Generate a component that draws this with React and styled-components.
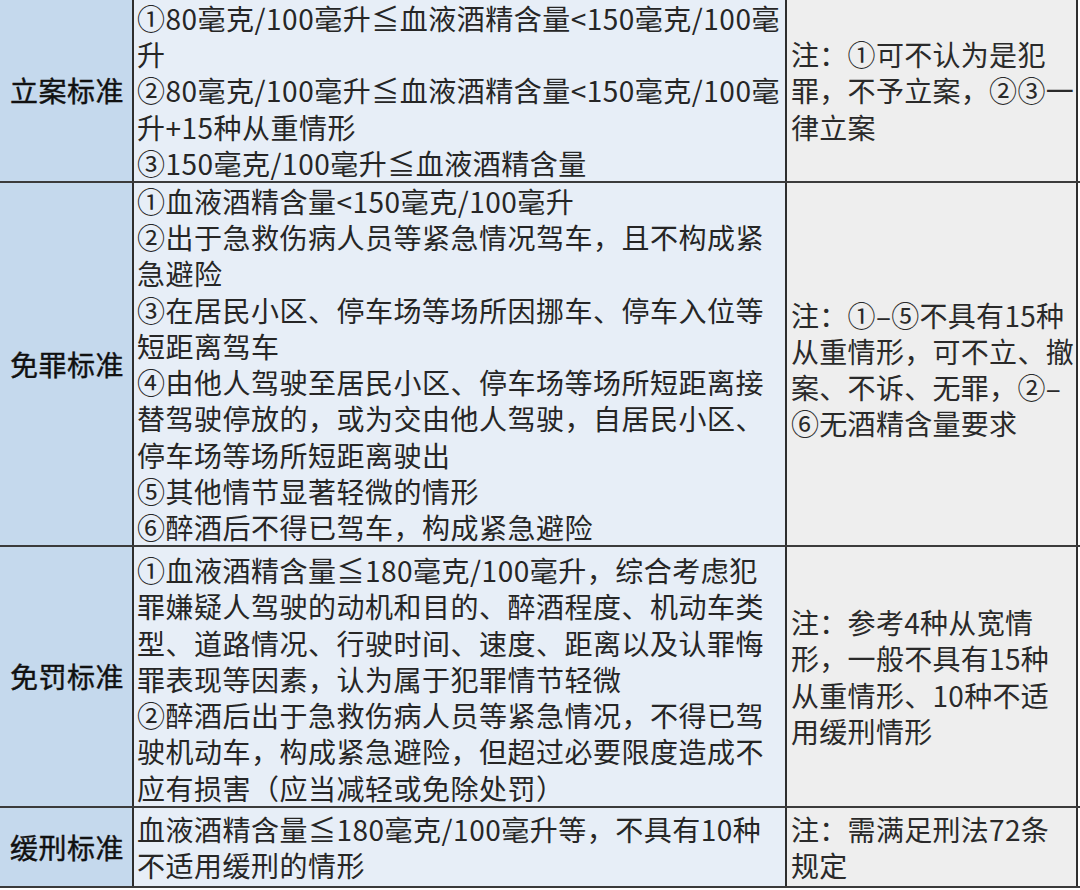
import React from "react";
import styled, { createGlobalStyle } from "styled-components";

const Global = createGlobalStyle`
  html, body { margin: 0; padding: 0; background: #ffffff; }
  body { font-family: "Noto Sans CJK SC", "Noto Sans", sans-serif; color: #222; }
`;

const Table = styled.div`
  width: 1080px;
  display: flex;
  flex-direction: column;
`;

const Row = styled.div`
  display: grid;
  grid-template-columns: 134px 653px 291px 2px;
  grid-template-rows: minmax(0, 1fr);
  height: ${(p) => p.$h}px;
  border-bottom: 2px solid #3b3b3b;
  box-sizing: border-box;
`;

const Cell = styled.div`
  display: flex;
  flex-direction: column;
  justify-content: center;
  box-sizing: border-box;
  min-height: 0;
  border-right: 2px solid #2e2e2e;
  font-size: 28px;
  line-height: 36.25px;
  letter-spacing: 0.5px;
  white-space: nowrap;
`;

const Label = styled(Cell)`
  background: #c5d9ed;
  align-items: center;
  font-weight: 400;
  color: #111;
  padding-left: 2px;
  -webkit-text-stroke: 0.4px #111;
`;

const Content = styled(Cell)`
  background: #e7eef7;
  padding-left: 3px;
  padding-top: ${(p) => p.$pt || 0}px;
  color: #262626;
`;

const Note = styled(Cell)`
  background: #eeeeee;
  padding-left: 4px;
  padding-top: ${(p) => p.$pt || 0}px;
  color: #2a2a2a;
  letter-spacing: 0.3px;
`;

const Edge = styled.div`
  background: #ffffff;
`;

const Line = styled.div`
  display: block;
`;

const rows = [
  {
    h: 183,
    label: "立案标准",
    content: [
      "①80毫克/100毫升≦血液酒精含量<150毫克/100毫",
      "升",
      "②80毫克/100毫升≦血液酒精含量<150毫克/100毫",
      "升+15种从重情形",
      "③150毫克/100毫升≦血液酒精含量",
    ],
    note: ["注：①可不认为是犯", "罪，不予立案，②③一", "律立案"],
  },
  {
    h: 364,
    label: "免罪标准",
    content: [
      "①血液酒精含量<150毫克/100毫升",
      "②出于急救伤病人员等紧急情况驾车，且不构成紧",
      "急避险",
      "③在居民小区、停车场等场所因挪车、停车入位等",
      "短距离驾车",
      "④由他人驾驶至居民小区、停车场等场所短距离接",
      "替驾驶停放的，或为交由他人驾驶，自居民小区、",
      "停车场等场所短距离驶出",
      "⑤其他情节显著轻微的情形",
      "⑥醉酒后不得已驾车，构成紧急避险",
    ],
    note: [
      "注：①–⑤不具有15种",
      "从重情形，可不立、撤",
      "案、不诉、无罪，②–",
      "⑥无酒精含量要求",
    ],
    notePt: 10,
  },
  {
    h: 261,
    label: "免罚标准",
    content: [
      "①血液酒精含量≦180毫克/100毫升，综合考虑犯",
      "罪嫌疑人驾驶的动机和目的、醉酒程度、机动车类",
      "型、道路情况、行驶时间、速度、距离以及认罪悔",
      "罪表现等因素，认为属于犯罪情节轻微",
      "②醉酒后出于急救伤病人员等紧急情况，不得已驾",
      "驶机动车，构成紧急避险，但超过必要限度造成不",
      "应有损害（应当减轻或免除处罚）",
    ],
    contentPt: 5,
    note: ["注：参考4种从宽情", "形，一般不具有15种", "从重情形、10种不适", "用缓刑情形"],
  },
  {
    h: 80,
    label: "缓刑标准",
    content: ["血液酒精含量≦180毫克/100毫升等，不具有10种", "不适用缓刑的情形"],
    note: ["注：需满足刑法72条", "规定"],
  },
];

export default function App() {
  return (
    <>
      <Global />
      <Table>
        {rows.map((r) => (
          <Row key={r.label} $h={r.h}>
            <Label>{r.label}</Label>
            <Content $pt={r.contentPt}>
              {r.content.map((t, i) => (
                <Line key={i}>{t}</Line>
              ))}
            </Content>
            <Note $pt={r.notePt}>
              {r.note.map((t, i) => (
                <Line key={i}>{t}</Line>
              ))}
            </Note>
            <Edge />
          </Row>
        ))}
      </Table>
    </>
  );
}
